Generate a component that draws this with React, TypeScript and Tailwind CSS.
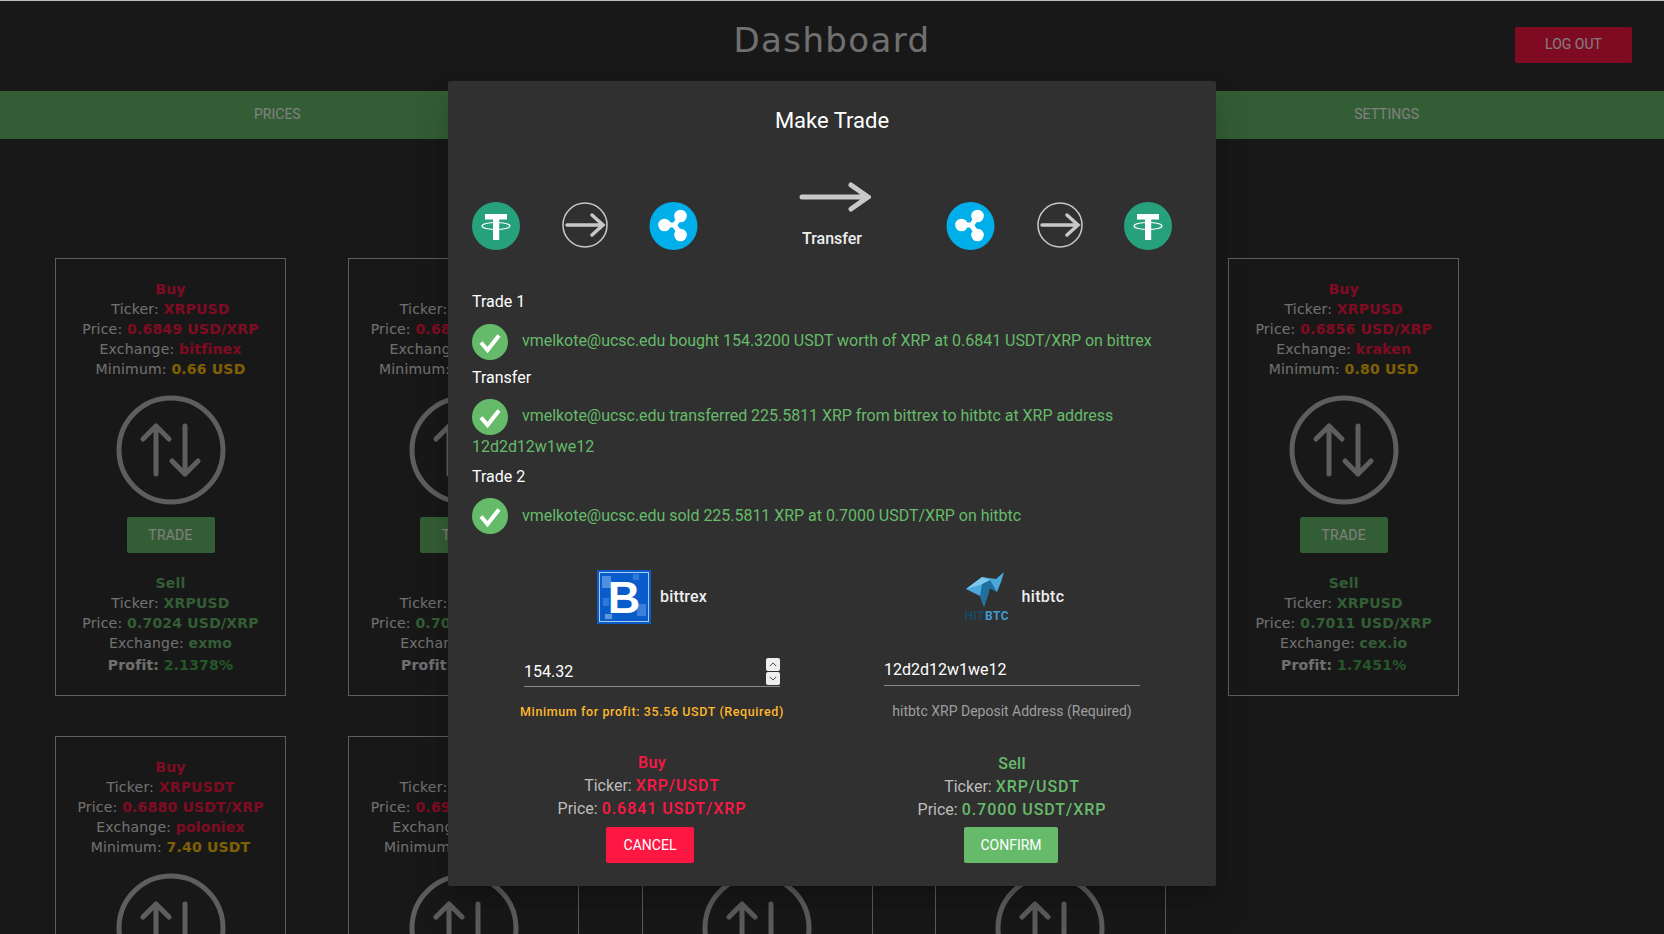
import React from "react";

type Side = { ticker: string; price: string; exchange: string };
type Pair = { buy: Side; minimum: string; sell: Side; profit: string };

const pairs: Pair[] = [
  { buy: { ticker: "XRPUSD", price: "0.6849 USD/XRP", exchange: "bitfinex" }, minimum: "0.66 USD", sell: { ticker: "XRPUSD", price: "0.7024 USD/XRP", exchange: "exmo" }, profit: "2.1378%" },
  { buy: { ticker: "XRPUSDT", price: "0.6880 USDT/XRP", exchange: "poloniex" }, minimum: "17.40 USDT", sell: { ticker: "XRPUSDT", price: "0.7024 USDT/XRP", exchange: "hitbtc" }, profit: "1.9451%" },
  { buy: { ticker: "XRPUSD", price: "0.6849 USD/XRP", exchange: "bitfinex" }, minimum: "0.66 USD", sell: { ticker: "XRPUSD", price: "0.7011 USD/XRP", exchange: "cex.io" }, profit: "1.8378%" },
  { buy: { ticker: "XRPUSD", price: "0.6856 USD/XRP", exchange: "kraken" }, minimum: "0.80 USD", sell: { ticker: "XRPUSD", price: "0.7024 USD/XRP", exchange: "exmo" }, profit: "1.9451%" },
  { buy: { ticker: "XRPUSD", price: "0.6856 USD/XRP", exchange: "kraken" }, minimum: "0.80 USD", sell: { ticker: "XRPUSD", price: "0.7011 USD/XRP", exchange: "cex.io" }, profit: "1.7451%" },
  { buy: { ticker: "XRPUSDT", price: "0.6880 USDT/XRP", exchange: "poloniex" }, minimum: "7.40 USDT", sell: { ticker: "XRPUSDT", price: "0.7000 USDT/XRP", exchange: "hitbtc" }, profit: "1.2000%" },
  { buy: { ticker: "XRPUSDT", price: "0.6900 USDT/XRP", exchange: "binance" }, minimum: "7.40 USDT", sell: { ticker: "XRPUSDT", price: "0.7000 USDT/XRP", exchange: "hitbtc" }, profit: "1.0000%" },
  { buy: { ticker: "XRPUSDT", price: "0.6880 USDT/XRP", exchange: "poloniex" }, minimum: "7.40 USDT", sell: { ticker: "XRPUSDT", price: "0.7000 USDT/XRP", exchange: "hitbtc" }, profit: "1.2000%" },
  { buy: { ticker: "XRPUSDT", price: "0.6900 USDT/XRP", exchange: "binance" }, minimum: "7.40 USDT", sell: { ticker: "XRPUSDT", price: "0.7000 USDT/XRP", exchange: "hitbtc" }, profit: "1.0000%" },
];

function SwapIcon() {
  return (
    <svg viewBox="0 0 110 110" className="w-[110px] h-[110px] block" fill="none" stroke="#bdbdbd" strokeWidth="5" strokeLinecap="round" strokeLinejoin="round">
      <circle cx="55" cy="55" r="52" />
      <path d="M40 79V31M27 44L40 31L53 44" />
      <path d="M69 31V79M56 66L69 79L82 66" />
    </svg>
  );
}

function PairCard({ pair }: { pair: Pair }) {
  return (
    <div className="w-[231px] h-[438px] shrink-0 border border-[#bdbdbd] pt-[20px] flex flex-col items-center text-[14px] leading-[20px] tracking-[0.2px] text-[#e0e0e0] font-['DejaVu_Sans',sans-serif]">
      <b className="text-[#ff1744]">Buy</b>
      <div>Ticker: <b className="text-[#ff1744]">{pair.buy.ticker}</b></div>
      <div>Price: <b className="text-[#ff1744]">{pair.buy.price}</b></div>
      <div>Exchange: <b className="text-[#ff1744]">{pair.buy.exchange}</b></div>
      <div>Minimum: <b className="text-[#ffc107]">{pair.minimum}</b></div>
      <div className="mt-[16px]"><SwapIcon /></div>
      <button className="mt-[12px] w-[88px] h-[36px] rounded-[2px] bg-[#66bb6a] text-[14px] text-white font-['Roboto',sans-serif]">TRADE</button>
      <b className="mt-[20px] text-[#66bb6a]">Sell</b>
      <div>Ticker: <b className="text-[#66bb6a]">{pair.sell.ticker}</b></div>
      <div>Price: <b className="text-[#66bb6a]">{pair.sell.price}</b></div>
      <div>Exchange: <b className="text-[#66bb6a]">{pair.sell.exchange}</b></div>
      <div className="mt-[2px]"><b>Profit:</b> <b className="text-[#4caf50]">{pair.profit}</b></div>
    </div>
  );
}

function Tether() {
  return (
    <svg viewBox="0 0 48 48" className="w-[48px] h-[48px] block">
      <circle cx="24" cy="24" r="24" fill="#26a17b" />
      <path d="M13 12H35V17.500H27.200V38H21V17.500H13Z" fill="#fff" />
      <ellipse cx="24" cy="24" rx="14" ry="3.500" fill="none" stroke="#fff" strokeWidth="1.200" />
    </svg>
  );
}

function Ripple() {
  return (
    <svg viewBox="0 0 48 48" className="w-[49px] h-[48px] block">
      <circle cx="24" cy="24" r="24" fill="#00aeea" />
      <path d="M31 14L25 23.500L31 32M15 23H25" fill="none" stroke="#fff" strokeWidth="5" />
      <circle cx="31" cy="14" r="6.300" fill="#fff" />
      <circle cx="15" cy="23" r="6.300" fill="#fff" />
      <circle cx="31" cy="33" r="6.300" fill="#fff" />
    </svg>
  );
}

function CircleArrow() {
  return (
    <svg viewBox="0 0 46 46" className="w-[46px] h-[46px] block" fill="none" stroke="#c8c8c8" strokeLinecap="round">
      <circle cx="23" cy="23" r="22" strokeWidth="1.500" />
      <path d="M5 23H39M30 13L41 23L30 33" strokeWidth="3.500" />
    </svg>
  );
}

function Check() {
  return (
    <svg viewBox="0 0 36 36" className="w-[36px] h-[36px] block">
      <circle cx="18" cy="18" r="18" fill="#66bb6a" />
      <path d="M9 18.500L15.500 26L27 11.500" fill="none" stroke="#fff" strokeWidth="4" />
    </svg>
  );
}

function BittrexLogo() {
  return (
    <div className="relative w-[54px] h-[54px] flex items-center justify-center">
      <svg viewBox="0 0 54 54" className="absolute inset-0 w-[54px] h-[54px]">
        <rect width="54" height="54" fill="#0b5ccb" />
        <rect x="5" y="6" width="9" height="12" fill="#4f8fe0" />
        <rect x="36" y="4" width="6" height="6" fill="#2f7ad8" />
        <rect x="40" y="34" width="9" height="12" fill="#3b80d8" />
        <rect x="6" y="28" width="6" height="8" fill="#2f7ad8" />
        <rect x="8" y="44" width="7" height="5" fill="#5f97dd" />
        <rect x="2.500" y="2.500" width="49" height="49" fill="none" stroke="#a9cbf3" strokeWidth="1" />
      </svg>
      <span className="relative text-white text-[45px] leading-none font-bold font-['Liberation_Sans',sans-serif]">B</span>
    </div>
  );
}

function HitbtcLogo() {
  return (
    <div className="w-[42px] h-[50px] flex flex-col items-center">
      <svg viewBox="0 0 42 36" className="w-[42px] h-[36px] block">
        <path d="M0 17L16 5L30 7L38 0L35 10L31 20L24 16L18 35L14 24Z" fill="#4aa8dc" />
        <path d="M14 24L18 35L24 16L31 20L24 8L16 12Z" fill="#1f6f9f" />
        <path d="M0 17L16 5L24 8L14 13Z" fill="#7cc8ee" />
      </svg>
      <div className="mt-[2px] text-[12px] leading-[12px] font-bold tracking-[0.5px] font-['Roboto',sans-serif]">
        <span className="text-[#174a66]">HIT</span><span className="text-[#3f9ad0]">BTC</span>
      </div>
    </div>
  );
}

function TradeRow({ text }: { text: string }) {
  return (
    <p className="text-[16px] leading-[30px] tracking-[-0.03px] text-[#66bb6a]">
      <span className="inline-block align-middle -my-[3px] mr-[14px]"><Check /></span>
      {text}
    </p>
  );
}

function Quote({ title, ticker, price, color }: { title: string; ticker: string; price: string; color: string }) {
  return (
    <div className="flex flex-col items-center text-[16px] leading-[23px] text-[#bdbdbd]">
      <b className={`font-medium tracking-[0.3px] ${color}`}>{title}</b>
      <div>Ticker: <span className={`font-medium tracking-[0.95px] ${color}`}>{ticker}</span></div>
      <div>Price: <span className={`font-medium tracking-[0.95px] ${color}`}>{price}</span></div>
    </div>
  );
}

export default function App() {
  return (
    <div className="relative h-screen overflow-hidden bg-[#303030] border-t border-[#bbb]">
      <header className="relative h-[90px] flex items-center justify-center">
        <h1 className="text-[34px] tracking-[1.400px] -mt-[11px] text-[#e0e0e0] font-['DejaVu_Sans',sans-serif]">Dashboard</h1>
        <button className="absolute left-[1515px] top-[26px] w-[117px] h-[36px] pb-[2px] rounded-[2px] bg-[#ff1744] text-[14px] text-white font-['Roboto',sans-serif]">LOG OUT</button>
      </header>
      <nav className="h-[48px] pb-[2px] grid grid-cols-3 items-center text-center bg-[#66bb6a] text-[14px] text-white font-['Roboto',sans-serif]">
        <span>PRICES</span>
        <span>TRADES</span>
        <span>SETTINGS</span>
      </nav>
      <main className="pt-[119px] pl-[55px] flex flex-wrap gap-x-[62.300px] gap-y-[40px]">
        {pairs.map((p, i) => (
          <PairCard key={i} pair={p} />
        ))}
      </main>

      <div className="absolute inset-0 bg-black/50 flex justify-center items-start pt-[80px]">
        <div className="w-[768px] h-[805px] rounded-[2px] bg-[#303030] px-[24px] pt-[24px] font-['Roboto',sans-serif] text-white shadow-[0_11px_15px_-7px_rgba(0,0,0,0.2),0_24px_38px_3px_rgba(0,0,0,0.14)]">
          <h2 className="text-[22px] leading-[32px] text-center">Make Trade</h2>

          <div className="flex">
            <div className="w-[226px] mt-[65px] flex justify-between">
              <Tether /><CircleArrow /><Ripple />
            </div>
            <div className="w-[226px] ml-[21px] mt-[44px] flex flex-col items-center">
              <svg viewBox="0 0 72 32" className="ml-[5px] w-[72px] h-[32px] block" fill="none" stroke="#c8c8c8" strokeWidth="5" strokeLinecap="round">
                <path d="M3 16H68M52 4L69 16L52 28" />
              </svg>
              <span className="mt-[14px] text-[16px] leading-[24px] font-medium text-[#eee]">Transfer</span>
            </div>
            <div className="w-[226px] ml-[1px] mt-[65px] flex justify-between">
              <Ripple /><CircleArrow /><Tether />
            </div>
          </div>

          <div className="mt-[39px] text-[16px] leading-[24px]">Trade 1</div>
          <div className="mt-[12px]"><TradeRow text="vmelkote@ucsc.edu bought 154.3200 USDT worth of XRP at 0.6841 USDT/XRP on bittrex" /></div>
          <div className="mt-[9px] text-[16px] leading-[24px]">Transfer</div>
          <div className="mt-[11px]"><TradeRow text="vmelkote@ucsc.edu transferred 225.5811 XRP from bittrex to hitbtc at XRP address 12d2d12w1we12" /></div>
          <div className="mt-[3px] text-[16px] leading-[24px]">Trade 2</div>
          <div className="mt-[12px]"><TradeRow text="vmelkote@ucsc.edu sold 225.5811 XRP at 0.7000 USDT/XRP on hitbtc" /></div>

          <div className="mt-[39px] grid grid-cols-2">
            <div className="flex flex-col items-center">
              <div className="h-[54px] flex items-center gap-[9px]">
                <BittrexLogo />
                <span className="text-[16px] tracking-[0.15px] font-medium text-[#eee]">bittrex</span>
              </div>
              <div className="relative mt-[35px] w-[256px] h-[28px] border-b border-[#8a8a8a]">
                <input readOnly value="154.32" className="w-full h-[25px] bg-transparent outline-none text-[16px] text-white" />
                <div className="absolute right-0 -top-[1px] w-[14px] flex flex-col gap-[1px]">
                  <div className="h-[13px] rounded-[2px] bg-[#eee] text-[#444] flex items-center justify-center">
                    <svg viewBox="0 0 10 6" className="w-[8px] h-[5px]" fill="none" stroke="currentColor" strokeWidth="1.200"><path d="M1 5L5 1L9 5" /></svg>
                  </div>
                  <div className="h-[13px] rounded-[2px] bg-[#eee] text-[#444] flex items-center justify-center">
                    <svg viewBox="0 0 10 6" className="w-[8px] h-[5px]" fill="none" stroke="currentColor" strokeWidth="1.200"><path d="M1 1L5 5L9 1" /></svg>
                  </div>
                </div>
              </div>
              <p className="mt-[15px] text-[12.500px] leading-[20px] font-medium tracking-[0.6px] text-[#ffb72b]">Minimum for profit: 35.56 USDT (Required)</p>
              <div className="mt-[29px]">
                <Quote title="Buy" ticker="XRP/USDT" price="0.6841 USDT/XRP" color="text-[#ff1744]" />
              </div>
              <button className="mt-[7px] -ml-[4px] w-[88px] h-[36px] rounded-[2px] bg-[#ff1744] text-[14px] text-white">CANCEL</button>
            </div>

            <div className="flex flex-col items-center">
              <div className="ml-[6px] h-[54px] flex items-center gap-[14px]">
                <HitbtcLogo />
                <span className="text-[16px] tracking-[0.3px] font-medium text-[#eee]">hitbtc</span>
              </div>
              <div className="mt-[34px] w-[256px] h-[28px] border-b border-[#8a8a8a]">
                <input readOnly value="12d2d12w1we12" className="w-full h-[24px] bg-transparent outline-none text-[16px] text-white" />
              </div>
              <p className="mt-[15px] text-[14px] leading-[20px] text-[#9e9e9e]">hitbtc XRP Deposit Address (Required)</p>
              <div className="mt-[31px]">
                <Quote title="Sell" ticker="XRP/USDT" price="0.7000 USDT/XRP" color="text-[#66bb6a]" />
              </div>
              <button className="mt-[6px] -ml-[2px] w-[94px] h-[36px] rounded-[2px] bg-[#66bb6a] text-[14px] text-white">CONFIRM</button>
            </div>
          </div>
        </div>
      </div>
    </div>
  );
}
